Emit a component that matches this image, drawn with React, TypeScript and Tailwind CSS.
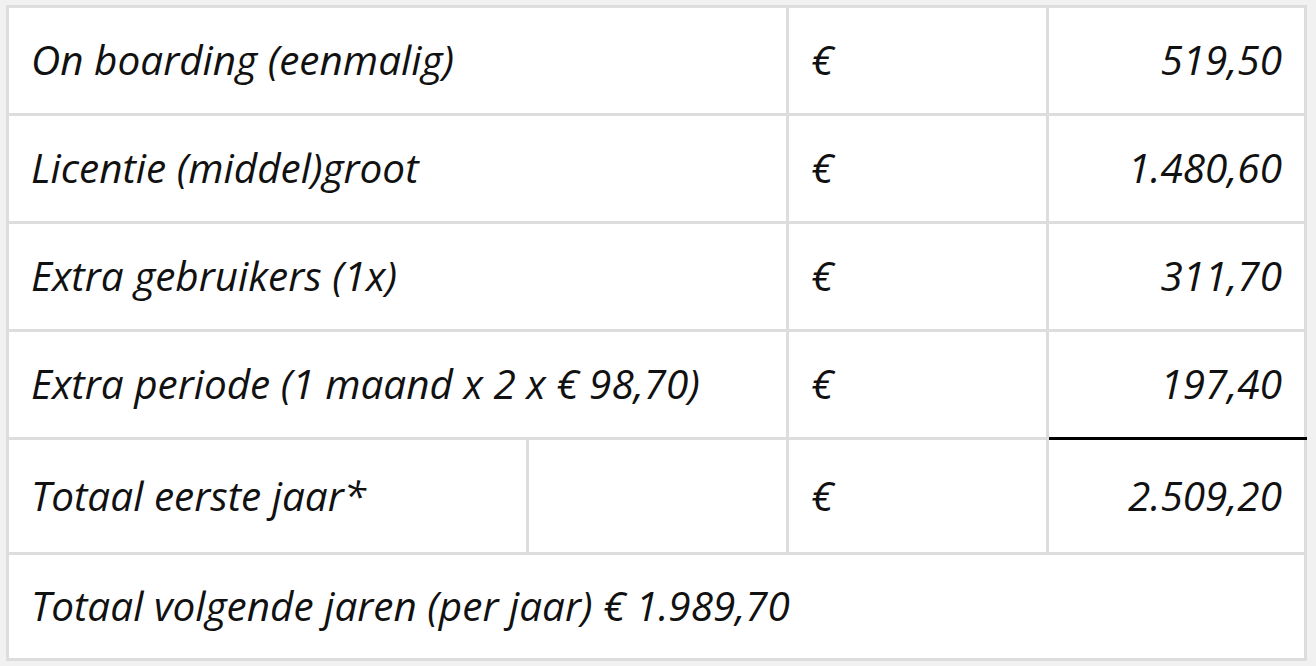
const rows = [
  { label: 'On boarding (eenmalig)', amount: '519,50' },
  { label: 'Licentie (middel)groot', amount: '1.480,60' },
  { label: 'Extra gebruikers (1x)', amount: '311,70' },
  { label: 'Extra periode (1 maand x 2 x € 98,70)', amount: '197,40', last: true },
];

const cell = 'border-[3px] border-[#dddddd] px-[22px] align-middle';

export default function App() {
  return (
    <div
      className="min-h-screen bg-[#f1f1f1] pt-[5px] pl-[6px] pr-[9px] pb-[8px] italic font-normal text-[40.5px] leading-[1.2] text-[#111]"
      style={{ fontFamily: '"Open Sans", sans-serif' }}
    >
      <table className="w-full border-collapse bg-white">
        <colgroup>
          <col className="w-[520px]" />
          <col className="w-[260px]" />
          <col className="w-[260px]" />
          <col />
        </colgroup>
        <tbody>
          {rows.map((r) => (
            <tr key={r.label} className="h-[108px]">
              <td colSpan={2} className={cell}>
                {r.label}
              </td>
              <td className={cell}>€</td>
              <td className={`${cell} text-right ${r.last ? 'border-b-black' : ''}`}>{r.amount}</td>
            </tr>
          ))}
          <tr className="h-[115px]">
            <td className={cell}>Totaal eerste jaar*</td>
            <td className={cell}></td>
            <td className={cell}>€</td>
            <td className={`${cell} text-right`}>2.509,20</td>
          </tr>
          <tr className="h-[106px]">
            <td colSpan={4} className={cell}>
              Totaal volgende jaren (per jaar) € 1.989,70
            </td>
          </tr>
        </tbody>
      </table>
    </div>
  );
}
